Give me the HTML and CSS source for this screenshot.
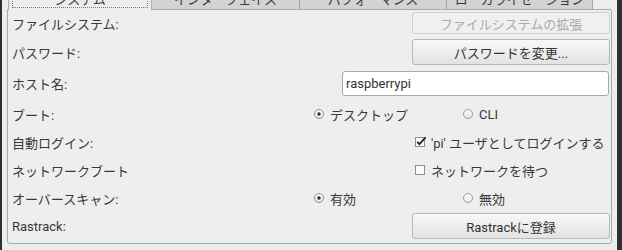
FILE: index.html
```html
<!DOCTYPE html>
<html lang="ja">
<head>
<meta charset="utf-8">
<link rel="stylesheet" href="styles.css">
</head>
<body>
<div class="screen">
  <div class="edge-left"></div>
  <div class="main">
    <div class="tabs">
      <div class="tab active"><span class="focus">システム</span></div>
      <div class="tab t2">インターフェイス</div>
      <div class="tab t3">パフォーマンス</div>
      <div class="tab t4">ローカライゼーション</div>
    </div>
    <div class="panel">
      <div class="row r1">
        <div class="label">ファイルシステム:</div>
        <button class="btn disabled small">ファイルシステムの拡張</button>
      </div>
      <div class="row r2">
        <div class="label">パスワード:</div>
        <button class="btn">パスワードを変更...</button>
      </div>
      <div class="row r3">
        <div class="label">ホスト名:</div>
        <div class="input">raspberrypi</div>
      </div>
      <div class="row r4">
        <div class="label">ブート:</div>
        <div class="radios">
          <div class="radio"><svg width="12" height="12" viewBox="0 0 12 12"><defs><linearGradient id="rg1" x1="0" y1="0" x2="0" y2="1"><stop offset="0" stop-color="#ffffff"/><stop offset="1" stop-color="#e4e4e4"/></linearGradient></defs><circle cx="6" cy="6" r="4.5" fill="url(#rg1)" stroke="#8e8e8e"/><circle cx="6" cy="6" r="1.7" fill="#2e2e2e"/></svg><span>デスクトップ</span></div>
          <div class="radio"><svg width="12" height="12" viewBox="0 0 12 12"><circle cx="6" cy="6" r="4.5" fill="url(#rg1)" stroke="#9a9a9a"/></svg><span class="latin">CLI</span></div>
        </div>
      </div>
      <div class="row r5">
        <div class="label">自動ログイン:</div>
        <div class="check"><svg width="12" height="12" viewBox="0 0 12 12"><rect x="0.5" y="1.5" width="9" height="9" fill="#fbfbfb" stroke="#8e8e8e"/><path d="M2.2 5.8 L4.4 8.2 L10.6 1.4" fill="none" stroke="#222" stroke-width="1.8"/></svg><span>'pi' ユーザとしてログインする</span></div>
      </div>
      <div class="row r6">
        <div class="label">ネットワークブート</div>
        <div class="check"><svg width="12" height="12" viewBox="0 0 12 12"><rect x="0.5" y="1.5" width="9" height="9" fill="#fbfbfb" stroke="#8e8e8e"/></svg><span>ネットワークを待つ</span></div>
      </div>
      <div class="row r7">
        <div class="label">オーバースキャン:</div>
        <div class="radios">
          <div class="radio"><svg width="12" height="12" viewBox="0 0 12 12"><circle cx="6" cy="6" r="4.5" fill="url(#rg1)" stroke="#8e8e8e"/><circle cx="6" cy="6" r="1.7" fill="#2e2e2e"/></svg><span>有効</span></div>
          <div class="radio"><svg width="12" height="12" viewBox="0 0 12 12"><circle cx="6" cy="6" r="4.5" fill="url(#rg1)" stroke="#9a9a9a"/></svg><span>無効</span></div>
        </div>
      </div>
      <div class="row r8">
        <div class="label">Rastrack:</div>
        <button class="btn">Rastrackに登録</button>
      </div>
    </div>
  </div>
  <div class="edge-right"></div>
</div>
</body>
</html>
```
FILE: styles.css
```css
* { box-sizing: border-box; }
html, body {
  margin: 0;
  padding: 0;
  width: 622px;
  height: 250px;
  overflow: hidden;
  background: #ededed;
}
body {
  font-family: Roboto, "Noto Sans CJK JP", sans-serif;
  font-size: 13px;
  color: #383838;
}
.screen {
  display: flex;
  width: 622px;
  height: 250px;
}
.edge-left {
  width: 2px;
  background: #2f2f2f;
  flex: none;
}
.edge-right {
  width: 5px;
  background: #2f2f2f;
  flex: none;
}
.main {
  width: 615px;
  flex: none;
  background: #ededed;
}
.tabs {
  display: flex;
  align-items: flex-start;
  margin-top: -11px;
  margin-left: 6px;
  height: 20px;
}
.tab {
  height: 20px;
  line-height: 20px;
  text-align: center;
  background: #d3d3d3;
  border: 1px solid #a3a3a3;
  border-bottom: none;
  color: #3a3a3a;
  white-space: nowrap;
  overflow: hidden;
}
.tab.active {
  position: relative;
  z-index: 2;
  width: 144px;
  height: 21px;
  background: #ededed;
  border-color: #b0b0b0;
  padding: 0 3px 2px 3px;
}
.focus {
  display: block;
  height: 100%;
  line-height: 18px;
  border: 1px dotted #7a7a7a;
}
.t2 { width: 149px; margin-left: -1px; }
.t3 { width: 148px; margin-left: -1px; }
.t4 { width: 147px; margin-left: -1px; }
.panel {
  margin-left: 5px;
  width: 605px;
  height: 235px;
  border: 1px solid #ababab;
  border-radius: 0 2px 3px 3px;
  background: #eeeeee;
  padding: 2px 0 0 4px;
}
.row {
  display: flex;
  align-items: center;
}
.r1 { height: 22px; }
.r2 { height: 26px; margin-top: 5px; }
.r3 { height: 25px; margin-top: 6px; }
.r4 { height: 28px; margin-top: 4px; }
.r5, .r6, .r7 { height: 28px; }
.r8 { height: 26px; margin-top: 1px; }
.label {
  width: 301px;
  flex: none;
  white-space: nowrap;
}
.btn {
  margin-left: 99px;
  width: 198px;
  height: 26px;
  font: inherit;
  color: #333;
  border: 1px solid #b7b7b7;
  border-radius: 3px;
  background: linear-gradient(#f8f8f8, #e2e2e2);
  padding: 0;
}
.btn.small { height: 22px; }
.btn.disabled {
  color: #a9a9a9;
  border-color: #cfcfcf;
  background: #f0f0f0;
}
.input {
  margin-left: 29px;
  width: 267px;
  height: 25px;
  line-height: 23px;
  border: 1px solid #a9a9a9;
  border-radius: 3px;
  background: #ffffff;
  padding-left: 3px;
  color: #333;
}
.radios {
  display: grid;
  grid-template-columns: 149px 149px;
}
.radio, .check {
  display: flex;
  align-items: center;
  gap: 5px;
  white-space: nowrap;
}
.radio svg, .check svg { flex: none; }
.check {
  margin-left: 102px;
  gap: 4px;
}
```
